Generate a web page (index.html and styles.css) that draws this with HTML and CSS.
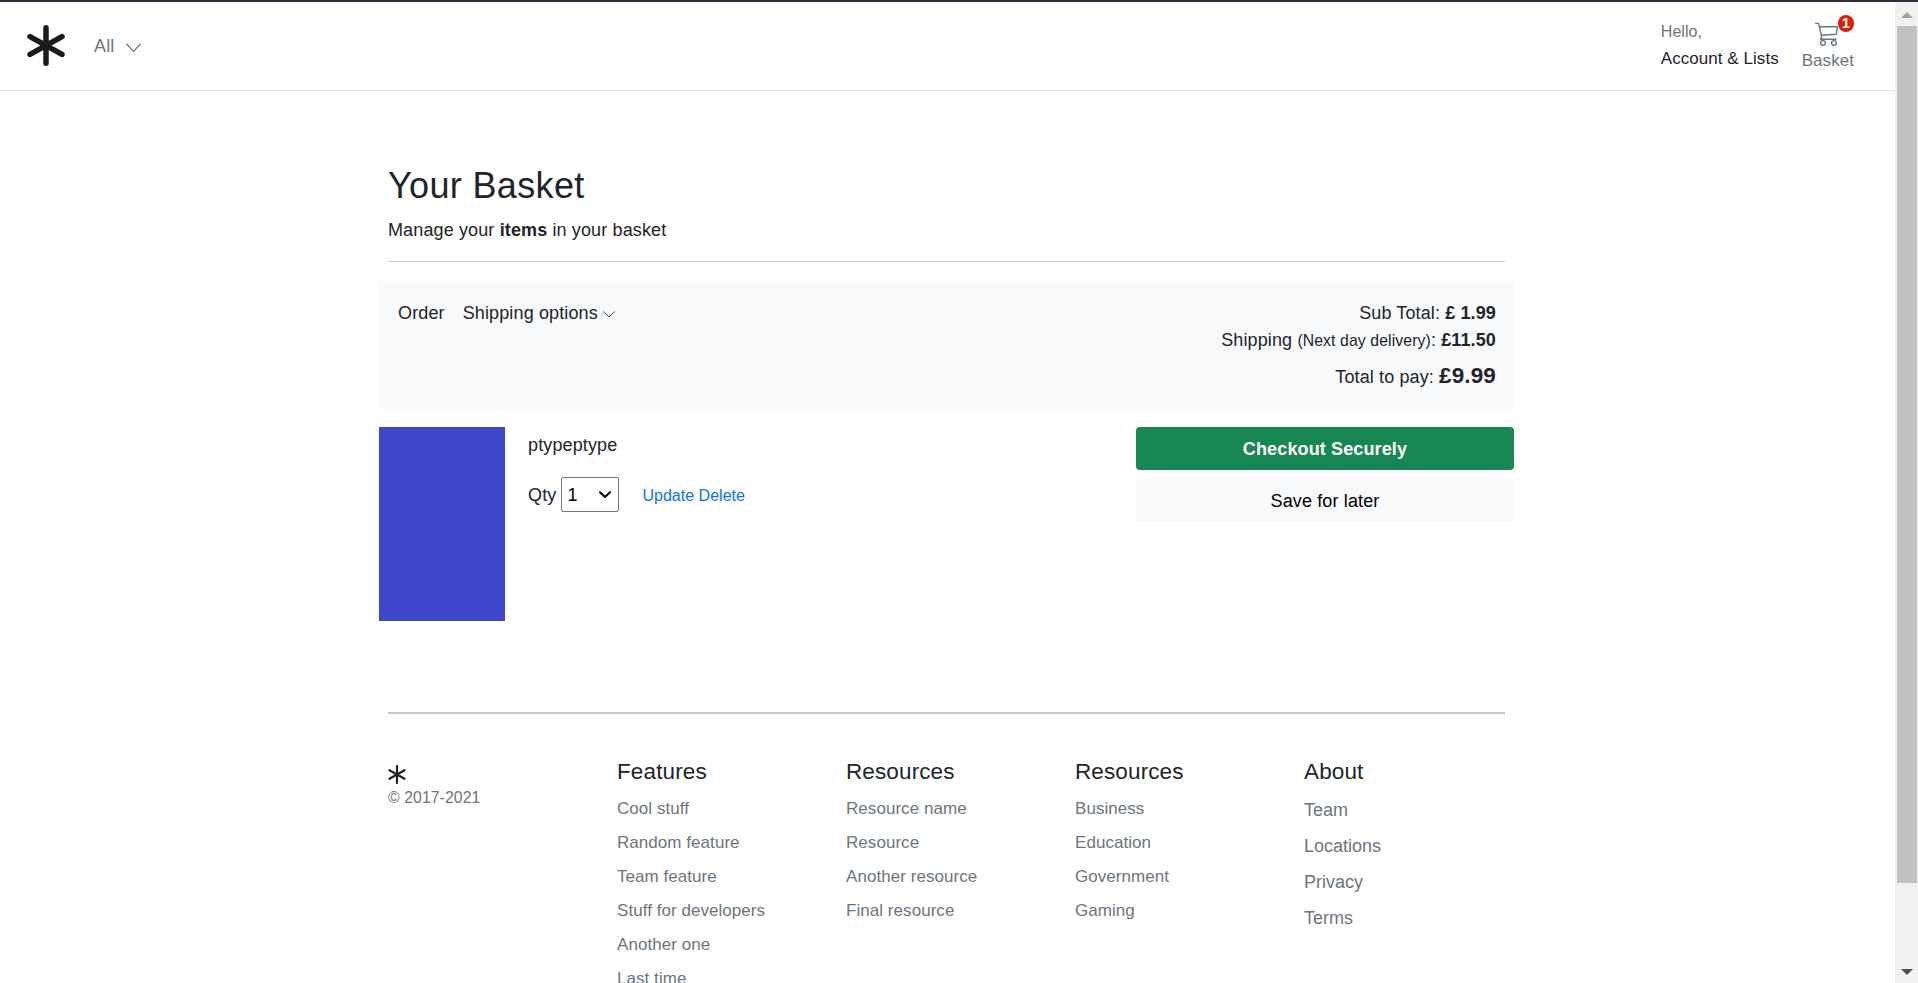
FILE: index.html
```html
<!DOCTYPE html>
<html lang="en">
<head>
<meta charset="utf-8">
<title>Your Basket</title>
<link rel="stylesheet" href="styles.css">
</head>
<body>
<div class="window">
  <div class="page">
    <header class="site-header">
      <svg class="logo" viewBox="0 0 38 41"><path d="M19 2.8v35.4M3 11.6l32 17.8M35 11.6L3 29.4"/></svg>
      <a class="all">All
        <svg class="all-chevron" viewBox="0 0 15 10"><path d="M.6 1l6.900 7.400L14.400 1"/></svg>
      </a>
      <div class="account"><span class="hello">Hello,</span><span>Account &amp; Lists</span></div>
      <a class="basket">
        <svg class="cart" viewBox="0 0 24 25"><path d="M.7 1.200l3.100.4L6.500 14.500Q6.600 16.500 5.500 17.200H21M4.600 4.800H22.300L21.300 12.200 6.200 13.200"/><circle cx="8" cy="21" r="2.400"/><circle cx="19" cy="21" r="2.400"/></svg>
        <span class="badge">1</span>
        <span>Basket</span>
      </a>
    </header>
    <main class="container">
      <div class="intro">
        <h1>Your Basket</h1>
        <p>Manage your <b>items</b> in your basket</p>
      </div>
      <section class="summary">
        <nav class="options">
          <span>Order</span>
          <span>Shipping options <svg class="small-chevron" viewBox="0 0 12 7"><path d="M.5.7L6 6l5.500-5.300"/></svg></span>
        </nav>
        <div class="totals">
          <div>Sub Total: <b>£ 1.99</b></div>
          <div>Shipping <small>(Next day delivery)</small>: <b>£11.50</b></div>
          <div class="total">Total to pay: <b>£9.99</b></div>
        </div>
      </section>
      <section class="item">
        <div class="thumb"></div>
        <div class="details">
          <p>ptypeptype</p>
          <div class="quantity">
            <label for="qty">Qty</label>
            <div class="select">
              <select id="qty"><option>1</option><option>2</option><option>3</option></select>
              <svg class="select-arrow" viewBox="0 0 12 8"><path d="M1 1.300l5 4.700 5-4.700"/></svg>
            </div>
            <span class="actions"><a>Update</a> <a>Delete</a></span>
          </div>
        </div>
        <div class="checkout">
          <button class="btn primary">Checkout Securely</button>
          <button class="btn light">Save for later</button>
        </div>
      </section>
      <footer class="footer">
        <div class="brand">
          <svg class="footer-logo" viewBox="0 0 18 19"><path d="M9 1v17M1.500 5.200l15 8.600M16.500 5.200l-15 8.600"/></svg>
          <small>© 2017-2021</small>
        </div>
        <div class="links"><h5>Features</h5><a>Cool stuff</a><a>Random feature</a><a>Team feature</a><a>Stuff for developers</a><a>Another one</a><a>Last time</a></div>
        <div class="links"><h5>Resources</h5><a>Resource name</a><a>Resource</a><a>Another resource</a><a>Final resource</a></div>
        <div class="links"><h5>Resources</h5><a>Business</a><a>Education</a><a>Government</a><a>Gaming</a></div>
        <div class="links large"><h5>About</h5><a>Team</a><a>Locations</a><a>Privacy</a><a>Terms</a></div>
      </footer>
    </main>
  </div>
  <div class="scrollbar">
    <svg class="arrow" viewBox="0 0 12 6"><path fill="#a3a3a3" d="M6 0l6 6H0z"/></svg>
    <div class="scroll-thumb"></div>
    <svg class="arrow" viewBox="0 0 12 6"><path fill="#505050" d="M0 0h12L6 6z"/></svg>
  </div>
</div>
</body>
</html>
```

FILE: styles.css
```css
* { box-sizing: border-box; }
body {
  margin: 0;
  background: #fff;
  color: #212529;
  font: 18px/27px "Liberation Sans", Arial, sans-serif;
  letter-spacing: .13px;
  overflow: hidden;
}
h1, h5, p { margin: 0; font-weight: 400; }
svg { display: block; fill: none; stroke-linecap: round; stroke-linejoin: round; }
small { font-size: 15.75px; }

.window {
  display: flex;
  height: 983px;
  border-top: 2px solid #2e2e3e;
  overflow: hidden;
}
.page { flex: 1; overflow: hidden; }

.site-header {
  display: flex;
  align-items: flex-start;
  height: 89px;
  padding: 0 41px 0 27px;
  border-bottom: 1px solid #dee2e6;
}
.logo { width: 38px; height: 41px; margin-top: 23px; stroke: #1b1b1b; stroke-width: 5.5; }
.all { display: flex; gap: 12px; margin: 31px 0 0 29px; color: #6c757d; }
.all-chevron { width: 15px; height: 10px; margin-top: 10px; stroke: #6c6c6c; stroke-width: 1.1; }
.account {
  display: flex;
  flex-direction: column;
  margin-left: auto;
  font-size: 17px;
  letter-spacing: .05px;
}
.account .hello { margin-top: 16px; font-size: 16px; color: #6c757d; }
.basket {
  position: relative;
  display: flex;
  flex-direction: column;
  align-items: center;
  margin-left: 23px;
  padding-top: 20px;
  color: #6c757d;
  font-size: 17px;
  letter-spacing: .05px;
}
.cart { width: 24px; height: 25px; margin-right: 2px; stroke: #6c757d; stroke-width: 1.4; }
.badge {
  position: absolute;
  top: 13px;
  right: 0;
  width: 16px;
  height: 17px;
  border-radius: 8px;
  background: #d9200f;
  color: #fff;
  font: bold 14px/17px "Liberation Sans", Arial, sans-serif;
  text-align: center;
}

.container { width: 1135px; margin-left: 379px; padding-top: 73px; }
.intro {
  margin: 0 9px 19px;
  padding-bottom: 17px;
  border-bottom: 1px solid #c8c9ca;
}
h1 { margin-bottom: 10px; font-size: 36px; line-height: 43px; letter-spacing: .35px; }

.summary {
  display: flex;
  justify-content: space-between;
  height: 128px;
  padding: 19px 18px 17px 19px;
  background: #f8f9fb;
}
.options { display: flex; gap: 18px; }
.small-chevron { display: inline-block; width: 12px; height: 7px; margin-bottom: 1px; stroke: #444; stroke-width: 1; }
.totals { text-align: right; letter-spacing: .12px; }
.total { margin-top: 5px; line-height: 34px; }
.total b { font-size: 22.5px; }

.item { display: flex; height: 285px; margin-top: 18px; }
.thumb { width: 126px; height: 194px; background: #3f48cc; }
.details { margin: 5px 0 0 23px; }
.quantity { display: flex; align-items: center; margin-top: 22px; line-height: 29px; height: 29px; }
.select { position: relative; width: 58px; height: 35px; margin: -2px 0 0 5px; }
.select select {
  appearance: none;
  width: 58px;
  height: 35px;
  padding: 0 5px;
  border: 1px solid #767676;
  border-radius: 2px;
  background: #fff;
  color: #000;
  font: 18px "Liberation Sans", Arial, sans-serif;
}
.select-arrow {
  position: absolute;
  top: 14px;
  right: 8px;
  width: 12px;
  height: 8px;
  stroke: #000;
  stroke-width: 2;
  pointer-events: none;
}
.actions { margin-left: 23px; font-size: 16px; letter-spacing: .02px; color: #0d6efd; }
.checkout {
  display: flex;
  flex-direction: column;
  gap: 9px;
  width: 378px;
  margin-left: auto;
}
.btn {
  height: 43px;
  padding: 2px 0 0;
  border: 0;
  border-radius: 4px;
  font: 18px/27px "Liberation Sans", Arial, sans-serif;
  letter-spacing: .13px;
}
.primary { background: #198754; color: #fff; font-weight: 700; }
.light { background: #f8f9fb; color: #000; }

.footer {
  display: grid;
  grid-template-columns: repeat(5, 229px);
  margin: 0 9px;
  width: 1117px;
  padding-top: 44px;
  border-top: 2px solid #c8c8c8;
}
.brand { color: #6c757d; }
.brand small { display: block; letter-spacing: .1px; }
.footer-logo { width: 18px; height: 19px; margin-top: 7px; stroke: #212529; stroke-width: 2.2; }
.links { display: flex; flex-direction: column; gap: 9px; color: #6c757d; font-size: 17px; line-height: 25px; letter-spacing: .05px; }
.links h5 { margin-bottom: 2px; color: #212529; font-size: 22.5px; line-height: 27px; letter-spacing: .12px; }
.large { font-size: 18px; line-height: 27px; letter-spacing: 0; }
.large h5 { margin-bottom: 3px; }

.scrollbar {
  display: flex;
  flex-direction: column;
  align-items: center;
  width: 23px;
  padding: 10px 0 8px;
  background: #f1f1f1;
}
.arrow { width: 12px; height: 6px; }
.scroll-thumb { width: 20px; height: 857px; margin: 8px 0 auto; background: #c1c1c1; }
```
